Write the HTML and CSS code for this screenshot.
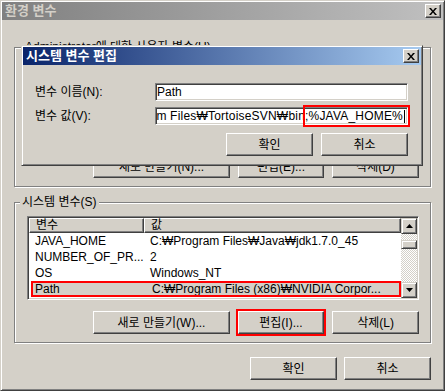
FILE: index.html
```html
<!DOCTYPE html>
<html lang="ko">
<head>
    <meta charset="utf-8">
    <title>환경 변수</title>
    <link rel="stylesheet" href="styles.css">
</head>
<body>
    <div class="window">
        <div class="titlebar inactive">
            <span class="title">환경 변수</span>
            <span class="close-btn">
                <svg width="8" height="7" viewBox="0 0 8 7"><path d="M0 0h2l2 2.5L6 0h2L5 3.5 8 7H6L4 4.5 2 7H0l3-3.5z" fill="#000"/></svg>
            </span>
        </div>

        <fieldset class="group group-user">
            <legend>Administrator에 대한 사용자 변수(U)</legend>
            <div class="list list-user"></div>
            <div class="btn-row">
                <button class="btn btn-new">새로 만들기(N)...</button>
                <button class="btn btn-edit">편집(E)...</button>
                <button class="btn">삭제(D)</button>
            </div>
        </fieldset>

        <fieldset class="group group-system">
            <legend>시스템 변수(S)</legend>
            <div class="list">
                <div class="list-main">
                    <div class="list-head"><span>변수</span><span>값</span></div>
                    <div class="list-row"><span>JAVA_HOME</span><span>C:₩Program Files₩Java₩jdk1.7.0_45</span></div>
                    <div class="list-row"><span>NUMBER_OF_PR...</span><span>2</span></div>
                    <div class="list-row"><span>OS</span><span>Windows_NT</span></div>
                    <div class="list-row selected"><span>Path</span><span>C:₩Program Files (x86)₩NVIDIA Corpor...</span></div>
                    <div class="list-row"><span>PATHEXT</span><span>.COM;.EXE;.BAT;.CMD;.VBS;.VBE;.JS;.JSE;.WSF</span></div>
                </div>
                <div class="scrollbar">
                    <span class="sb-btn"><svg width="7" height="4" viewBox="0 0 7 4"><path d="M3.5 0L7 4H0z" fill="#000"/></svg></span>
                    <div class="sb-track"><span class="sb-thumb"></span></div>
                    <span class="sb-btn"><svg width="7" height="4" viewBox="0 0 7 4"><path d="M0 0h7L3.5 4z" fill="#000"/></svg></span>
                </div>
            </div>
            <div class="btn-row">
                <button class="btn btn-new">새로 만들기(W)...</button>
                <button class="btn btn-edit marked">편집(I)...</button>
                <button class="btn">삭제(L)</button>
            </div>
        </fieldset>

        <div class="footer">
            <button class="btn">확인</button>
            <button class="btn">취소</button>
        </div>

        <!-- 편집 대화상자 -->
        <div class="dialog">
            <div class="titlebar active">
                <span class="title">시스템 변수 편집</span>
                <span class="close-btn">
                    <svg width="8" height="7" viewBox="0 0 8 7"><path d="M0 0h2l2 2.5L6 0h2L5 3.5 8 7H6L4 4.5 2 7H0l3-3.5z" fill="#000"/></svg>
                </span>
            </div>
            <div class="dialog-body">
                <div class="field-row">
                    <label>변수 이름(N):</label>
                    <div class="textbox-wrap"><div class="textbox">Path</div></div>
                </div>
                <div class="field-row">
                    <label>변수 값(V):</label>
                    <div class="textbox-wrap">
                        <div class="textbox scrolled">m Files₩TortoiseSVN₩bin;%JAVA_HOME%<span class="caret"></span></div>
                        <span class="mark"></span>
                    </div>
                </div>
                <div class="btn-row">
                    <button class="btn">확인</button>
                    <button class="btn">취소</button>
                </div>
            </div>
        </div>
    </div>
</body>
</html>
```

FILE: styles.css
```css
* { box-sizing: border-box; }
body { margin: 0; background: #d4d0c8; color: #000; font: 12px/14px "Liberation Sans", "Noto Sans CJK KR", sans-serif; overflow: hidden; }

.window { position: relative; width: 445px; height: 391px; padding: 1px; border: 1px solid; border-color: #d4d0c8 #404040 #404040 #d4d0c8; box-shadow: inset 1px 1px #fff, inset -1px -1px #808080; }

.titlebar { display: flex; align-items: center; justify-content: space-between; height: 18px; padding: 0 2px 0 3px; }
.titlebar.inactive { background: linear-gradient(to right, #808080, #c0c0c0); color: #d4d0c8; }
.titlebar.active { background: linear-gradient(to right, #0a246a, #a6caf0); color: #fff; }
.title { font-weight: bold; font-size: 13px; }
.close-btn { display: flex; align-items: center; justify-content: center; width: 16px; height: 14px; background: #d4d0c8; border: 1px solid; border-color: #fff #404040 #404040 #fff; box-shadow: inset -1px -1px #808080; }

.btn { width: 87px; height: 23px; padding: 0; font: inherit; color: #000; background: #d4d0c8; border: 1px solid; border-color: #fff #404040 #404040 #fff; box-shadow: inset -1px -1px #808080; }
.btn-new { width: 137px; }
.btn-edit { width: 86px; }
.btn.marked { outline: 2px solid #f00; }
.btn-row { display: flex; justify-content: flex-end; gap: 8px; }

.group { margin: 20px 12px 0; padding: 0 11px 8px 12px; min-width: 0; border: 1px solid #808080; box-shadow: 1px 1px #fff, inset 1px 1px #fff; }
.group legend { margin-left: -7px; padding: 0 2px; background: #d4d0c8; }
.group-user legend { margin-left: -4px; }
.group-system { margin-top: 8px; }
.group .btn-row { margin-top: 11px; }
.group-user .btn-row { margin-top: 10px; }

.list { display: flex; height: 84px; margin-top: 7px; background: #fff; border: 1px solid; border-color: #808080 #fff #fff #808080; box-shadow: inset 1px 1px #404040, inset -1px -1px #d4d0c8; padding: 1px; }
.list-user { height: 85px; margin-top: 6px; }
.list-main { flex: 1; overflow: hidden; }
.list-head, .list-row { display: grid; grid-template-columns: 115px 1fr; white-space: nowrap; }
.list-head span { height: 15px; line-height: 13px; padding-left: 6px; background: #d4d0c8; border: 1px solid; border-color: #fff #404040 #404040 #fff; box-shadow: inset -1px -1px #808080; }
.list-row { height: 16px; line-height: 16px; }
.list-row span { padding-left: 6px; overflow: hidden; }
.list-row.selected { background: #d4d0c8; outline: 2px solid #f00; outline-offset: -2px; margin-left: 2px; }
.list-row.selected span:first-child { padding-left: 4px; }

.scrollbar { display: flex; flex-direction: column; width: 16px; }
.sb-btn { display: flex; align-items: center; justify-content: center; height: 16px; background: #d4d0c8; border: 1px solid; border-color: #d4d0c8 #404040 #404040 #d4d0c8; box-shadow: inset 1px 1px #fff, inset -1px -1px #808080; }
.sb-track { flex: 1; background: repeating-conic-gradient(#d4d0c8 0 25%, #fff 0 50%) 0 0 / 2px 2px; }
.sb-thumb { display: block; height: 9px; margin-top: 6px; background: #d4d0c8; border: 1px solid; border-color: #d4d0c8 #404040 #404040 #d4d0c8; box-shadow: inset 1px 1px #fff, inset -1px -1px #808080; }

.footer { display: flex; justify-content: flex-end; gap: 7px; margin-top: 14px; padding-right: 12px; }

.dialog { position: absolute; left: 20px; top: 44px; width: 402px; height: 121px; padding: 1px; background: #d4d0c8; border: 1px solid; border-color: #d4d0c8 #404040 #404040 #d4d0c8; box-shadow: inset 1px 1px #fff, inset -1px -1px #808080; }
.dialog-body { padding: 18px 13px 0 12px; }
.field-row { display: flex; align-items: center; height: 18px; margin-bottom: 6px; }
.field-row label { width: 120px; }
.textbox-wrap { position: relative; flex: 1; min-width: 0; }
.textbox { display: flex; align-items: center; height: 18px; padding: 0 1px; overflow: hidden; white-space: nowrap; background: #fff; border: 1px solid; border-color: #808080 #fff #fff #808080; box-shadow: inset 1px 1px #404040, inset -1px -1px #d4d0c8; }
.textbox.scrolled { justify-content: flex-end; padding-right: 2px; letter-spacing: 0.2px; }
.caret { flex: none; width: 1px; height: 13px; margin-left: 1px; background: #000; }
.mark { position: absolute; top: -2px; bottom: -2px; right: -2px; width: 107px; border: 2px solid #f00; }
.dialog .btn-row { margin-top: 8px; }
```
